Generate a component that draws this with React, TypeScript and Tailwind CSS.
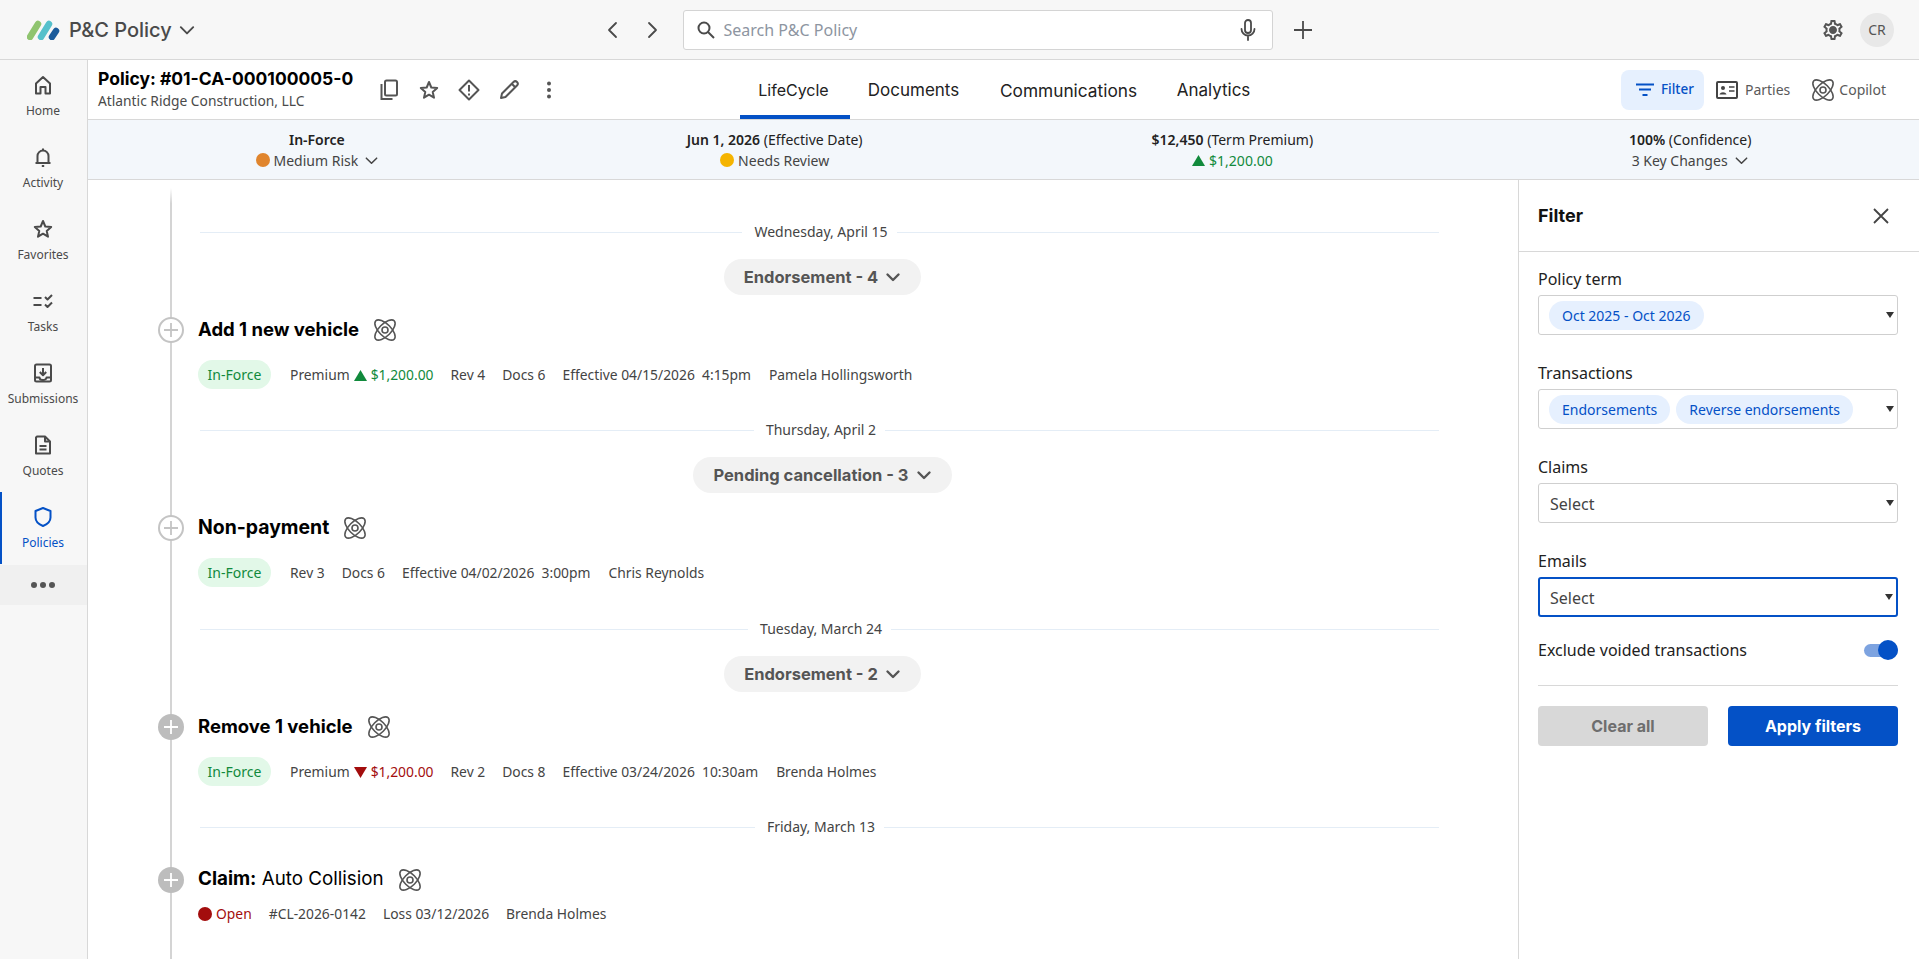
import React from "react";
import { MdOutlineSettings } from "react-icons/md";

const C = "fill-none stroke-current";
const Atom = ({ s = 24 }: { s?: number }) => (
  <svg width={s} height={s} viewBox="0 0 24 24" className="fill-none stroke-[#555] shrink-0" strokeWidth="1.6">
    <ellipse cx="12" cy="12" rx="6" ry="13" transform="rotate(-45 12 12)" />
    <ellipse cx="12" cy="12" rx="6" ry="13" transform="rotate(45 12 12)" />
    <circle cx="12" cy="12" r="3" />
  </svg>
);
const Chev = ({ s = 16, w = 1.6 }: { s?: number; w?: number }) => (
  <svg width={s} height={s} viewBox="0 0 16 16" className={C} strokeWidth={w} strokeLinecap="round" strokeLinejoin="round">
    <path d="M2.500 5.500 8 11l5.500-5.500" />
  </svg>
);
const Dot = ({ c }: { c: string }) => <span className={`inline-block w-[14px] h-[14px] rounded-full ${c}`} />;
const Up = () => (
  <svg width="13" height="11" viewBox="0 0 13 11" className="fill-[#118a3c]"><path d="M6.500 0 13 11H0z" /></svg>
);
const Down = () => (
  <svg width="13" height="11" viewBox="0 0 13 11" className="fill-[#a30d0d]"><path d="M6.500 11 13 0H0z" /></svg>
);

const icons: Record<string, React.ReactNode> = {
  Home: <path d="M5 20.500v-10L12 4l7 6.500v10h-4.500v-6.500h-5v6.500z" />,
  Activity: <><path d="M6.500 18v-7a5.500 5.500 0 0 1 11 0v7" /><path d="M4.500 18h15M12 3.500v2M10.800 21h2.400" /></>,
  Favorites: <path d="m12 4 2.300 5.500 5.900.5-4.500 3.900 1.300 5.800-5-3-5 3 1.300-5.800-4.500-3.900 5.900-.5z" />,
  Tasks: <><path d="M2.500 9h8M2.500 16h8M14 8l2.500 2.500L21 6M14 15.500l2.500 2.500 4.500-4.500" /></>,
  Submissions: <><rect x="4" y="3.500" width="16" height="17" rx="1.500" /><path d="M12 7v7M8.800 11l3.200 3.200 3.200-3.200M4 16.500h4.500a3.500 2.500 0 0 0 7 0H20" /></>,
  Quotes: <><path d="M6 3.500h8l5 5V20.500H5V4.500z" /><path d="M14 3.500v5h5M8.500 13h7M8.500 16.500h7" /></>,
  Policies: <path d="M12 3 19.500 6v6.500c0 4-3.200 6.800-7.500 8.500-4.300-1.700-7.500-4.500-7.500-8.500V6z" />,
};

const NavItem = ({ n, active }: { n: string; active?: boolean }) => (
  <div className={`relative h-[72px] flex flex-col items-center justify-start pt-[13px] pr-[1px] ${active ? "text-[#0451c6]" : "text-[#4a4a4a]"}`}>
    {active && <span className="absolute left-0 top-0 bottom-0 w-[2px] bg-[#0451c6]" />}
    <svg width="24" height="24" viewBox="0 0 24 24" className={C} strokeWidth="2" strokeLinejoin="round">{icons[n]}</svg>
    <span className="text-[12px] leading-[16px] mt-[6px]">{n}</span>
  </div>
);

const DateRow = ({ d }: { d: string }) => (
  <div className="h-5 flex items-center ml-[112px] mr-[79px] gap-[9px] text-[14px] text-[#444]">
    <div className="flex-1 h-px bg-[#e4edf6]" />
    <span className="pl-[3px] pb-[2px]">{d}</span>
    <div className="flex-1 h-px bg-[#e4edf6]" />
  </div>
);
const Pill = ({ t }: { t: string }) => (
  <div className="mt-[17px] ml-[115px] mr-[76px] flex justify-center">
    <div className="h-9 px-[20px] rounded-full bg-[#f2f2f2] flex items-center gap-[7px] font-['Inter',sans-serif] font-bold text-[16.500px] text-[#555]">
      {t}<Chev s={16} w={2.400} />
    </div>
  </div>
);
const Title = ({ filled, children }: { filled?: boolean; children: React.ReactNode }) => (
  <div className="relative h-[26px] mt-[22px] ml-[110px] flex items-center gap-[14px] font-['Inter',sans-serif] text-[18.500px] text-black">
    <span className={`absolute left-[-40px] top-0 w-[26px] h-[26px] rounded-full flex items-center justify-center ${filled ? "bg-[#bdbdbd] text-white" : "bg-white border-2 border-[#c4c4c4] text-[#c4c4c4]"}`}>
      <svg width="16" height="16" viewBox="0 0 16 16" className={C} strokeWidth="1.800"><path d="M8 1v14M1 8h14" /></svg>
    </span>
    <span className="pb-[1px]">{children}</span>
    <Atom />
  </div>
);
const Chip = () => (
  <span className="h-[29px] w-[73px] rounded-full bg-[#e2f8e8] text-[#118a3c] text-[14px] flex items-center justify-center">In-Force</span>
);
const Row = ({ children }: { children: React.ReactNode }) => (
  <div className="mt-[17px] ml-[110px] h-[29px] flex items-center text-[13.850px] text-[#444] whitespace-pre [&>span:not(:first-child)]:pt-[2px]">{children}</div>
);

const Field = ({ l, children, focus }: { l: string; children: React.ReactNode; focus?: boolean }) => (
  <div className="mb-[27px]">
    <div className="text-[16px] leading-[22px] text-[#222] mb-[6px] h-[21px]">{l}</div>
    <div className={`h-10 rounded-[3px] flex items-center pr-[3px] bg-white ${focus ? "border-2 border-[#0451c6] pl-[9px]" : "border border-[#cfcfcf] pl-[10px]"}`}>
      <div className="flex-1 flex gap-[6px] items-center text-[16px] text-[#444]">{children}</div>
      <svg width="8" height="6" viewBox="0 0 8 6" className="fill-[#333]"><path d="M0 0h8L4 6z" /></svg>
    </div>
  </div>
);
const Tag = ({ t }: { t: string }) => (
  <span className="h-[29px] px-[13px] rounded-full bg-[#e6f0fe] text-[#0451c6] text-[14px] flex items-center">{t}</span>
);
const Sel = () => <span className="pl-[1px] pt-[1px]">Select</span>;

export default function App() {
  return (
    <div className="w-[1919px] h-[959px] overflow-hidden flex flex-col bg-white font-['Noto_Sans',sans-serif]">
      <header className="h-[60px] shrink-0 bg-[#f7f7f7] border-b border-[#d8d8d8] grid grid-cols-[1fr_auto_1fr] items-center">
        <div className="flex items-center pl-[27px] text-[#4a4a4a]">
          <svg width="33" height="20" viewBox="0 0 33 20">
            <path d="M3 17 11 4" stroke="#8fc46f" strokeWidth="6.500" strokeLinecap="round" />
            <path d="M14 17 22 4" stroke="#55c0cb" strokeWidth="6.500" strokeLinecap="round" />
            <path d="M25 17l4-6" stroke="#1a5b9b" strokeWidth="6.500" strokeLinecap="round" />
          </svg>
          <span className="ml-[9px] font-['Inter',sans-serif] font-medium text-[20px]">P&amp;C Policy</span>
          <span className="ml-[6px]"><Chev s={18} w={1.700} /></span>
        </div>
        <div className="flex items-center text-[#4a4a4a] pr-[2px]">
          <svg width="20" height="24" viewBox="0 0 20 24" className={`${C} -ml-[1px]`} strokeWidth="1.800" strokeLinecap="round" strokeLinejoin="round"><path d="m14 5-7 7 7 7" /></svg>
          <svg width="20" height="24" viewBox="0 0 20 24" className={`${C} ml-[21px]`} strokeWidth="1.800" strokeLinecap="round" strokeLinejoin="round"><path d="m6 5 7 7-7 7" /></svg>
          <div className="ml-[20px] w-[590px] h-10 bg-white border border-[#d4d4d4] rounded-[3px] flex items-center pl-[12px] pr-[14px]">
            <svg width="20" height="20" viewBox="0 0 20 20" className={C} strokeWidth="2"><circle cx="8" cy="8" r="5.500" /><path d="m12 12 6 6" /></svg>
            <span className="ml-[8px] flex-1 text-[16px] text-[#8d95a1]">Search P&amp;C Policy</span>
            <svg width="20" height="24" viewBox="0 0 20 24" className={C} strokeWidth="1.800" strokeLinecap="round"><rect x="7" y="2" width="6" height="13" rx="3" /><path d="M3.500 11a6.500 6.500 0 0 0 13 0M10 18v4" /></svg>
          </div>
          <svg width="24" height="24" viewBox="0 0 24 24" className={`${C} ml-[18px]`} strokeWidth="1.800"><path d="M12 3v18M3 12h18" /></svg>
        </div>
        <div className="flex items-center justify-end pr-[25px] text-[#555]">
          <span className="relative w-[24px] h-[24px]">
            <MdOutlineSettings size={24} />
            <span className="absolute left-[9px] top-[9px] w-[6px] h-[6px] rounded-full bg-[#555]" />
          </span>
          <span className="ml-[15px] w-[34px] h-[34px] rounded-full bg-[#e8e8e8] text-[14px] flex items-center justify-center">CR</span>
        </div>
      </header>

      <div className="flex-1 flex min-h-0">
        <nav className="w-[88px] shrink-0 bg-[#f7f7f7] border-r border-[#d8d8d8]">
          {["Home", "Activity", "Favorites", "Tasks", "Submissions", "Quotes"].map((n) => <NavItem key={n} n={n} />)}
          <NavItem n="Policies" active />
          <div className="h-10 mt-[1px] pr-[1px] bg-[#f0f0f0] flex items-center justify-center gap-[3px]">
            {[0, 1, 2].map((i) => <span key={i} className="w-[6px] h-[6px] rounded-full bg-[#555]" />)}
          </div>
        </nav>

        <div className="flex-1 flex flex-col min-w-0">
          <div className="h-[60px] shrink-0 border-b border-[#d8d8d8] grid grid-cols-[1fr_auto_1fr] items-center">
            <div className="flex items-center pl-[10px]">
              <div>
                <div className="font-['Inter',sans-serif] font-bold text-[17.500px] leading-[22px] text-black">Policy: #01-CA-000100005-0</div>
                <div className="text-[13.800px] leading-[20px] text-[#4a4a4a] mt-[1px]">Atlantic Ridge Construction, LLC</div>
              </div>
              <div className="ml-[24px] flex items-center gap-[16px] text-[#555]">
                <svg width="24" height="24" viewBox="0 0 24 24" className={C} strokeWidth="2"><path d="M4.500 6v15h11" /><rect x="8" y="2.500" width="12" height="15" rx="1.500" /></svg>
                <svg width="24" height="24" viewBox="0 0 24 24" className={C} strokeWidth="2" strokeLinejoin="round"><path d="m12 4 2.300 5.500 5.900.5-4.500 3.900 1.300 5.800-5-3-5 3 1.300-5.800-4.500-3.900 5.900-.5z" /></svg>
                <svg width="24" height="24" viewBox="0 0 24 24" className={C} strokeWidth="2" strokeLinejoin="round"><path d="M12 2.500 21.500 12 12 21.500 2.500 12z" /><path d="M12 7v6.500M12 15.500v2" /></svg>
                <svg width="24" height="24" viewBox="0 0 24 24" className={C} strokeWidth="2" strokeLinejoin="round"><path d="m4 20 1-4.500L16.500 4a2 2 0 0 1 3.500 3.500L8.500 19zM15 6l3.500 3.500" /></svg>
                <svg width="24" height="24" viewBox="0 0 24 24" className="fill-[#555]"><circle cx="12" cy="5.500" r="2" /><circle cx="12" cy="12" r="2" /><circle cx="12" cy="18.500" r="2" /></svg>
              </div>
            </div>
            <div className="flex h-full font-['Inter',sans-serif] text-[17px] text-[#222]">
              <div className="w-[110px] flex items-center justify-center border-b-4 border-[#0451c6] pt-[4px] pr-[2px] text-[16px]">LifeCycle</div>
              <div className="w-[128px] flex items-center justify-center pt-[2px]">Documents</div>
              <div className="w-[182px] flex items-center justify-center pt-[2px] text-[17.300px]">Communications</div>
              <div className="w-[108px] flex items-center justify-center pt-[2px]">Analytics</div>
            </div>
            <div className="flex items-center justify-end pr-[33px] text-[14px] text-[#5a5a5a]">
              <div className="h-10 w-[83px] rounded-[8px] bg-[#e6f0fe] text-[#0451c6] text-[13.500px] font-medium flex items-center pl-[15px] gap-[7px]">
                <svg width="18" height="14" viewBox="0 0 18 14" className={C} strokeWidth="2"><path d="M0 1.500h18M3 6.500h12M6.500 12h5" /></svg>Filter
              </div>
              <svg width="22" height="20" viewBox="0 0 22 20" className={`${C} ml-[12px] text-[#444]`} strokeWidth="2"><rect x="1" y="2" width="20" height="16" rx="1" /><circle cx="7" cy="8" r="2" className="fill-current stroke-none" /><path d="M3.500 14.500c1-3 6-3 7 0z" className="fill-current stroke-none" /><path d="M13 7h5.500M13 11h5.500" strokeWidth="1.600" /></svg>
              <span className="ml-[7px]">Parties</span>
              <span className="ml-[21px]"><Atom /></span>
              <span className="ml-[4px]">Copilot</span>
            </div>
          </div>

          <div className="h-[60px] shrink-0 bg-[#f3f7fb] border-b border-[#d8d8d8] grid grid-cols-4 text-[14px] leading-[21px] text-[#222] text-center content-center">
            <div>
              <div className="font-semibold">In-Force</div>
              <div className="flex items-center justify-center gap-[4px] text-[#444] pl-[1px]"><Dot c="bg-[#e0852d]" />Medium Risk<span className="ml-[2px]"><Chev s={15} /></span></div>
            </div>
            <div>
              <div><b className="font-semibold">Jun 1, 2026</b> (Effective Date)</div>
              <div className="flex items-center justify-center gap-[4px] text-[#444]"><Dot c="bg-[#f5b400]" />Needs Review</div>
            </div>
            <div>
              <div><b className="font-semibold">$12,450</b> (Term Premium)</div>
              <div className="flex items-center justify-center gap-[4px] text-[#118a3c]"><Up />$1,200.00</div>
            </div>
            <div>
              <div><b className="font-semibold">100%</b> (Confidence)</div>
              <div className="flex items-center justify-center gap-[6px] text-[#444]">3 Key Changes<Chev s={15} /></div>
            </div>
          </div>

          <div className="flex-1 flex min-h-0">
            <main className="relative flex-1 min-w-0 overflow-hidden pt-[42px]">
              <div className="absolute left-[82px] top-[8px] bottom-0 w-[2px] bg-linear-to-b from-white to-[#d4d4d4] to-2%" />
              <DateRow d="Wednesday, April 15" />
              <Pill t="Endorsement - 4" />
              <Title><b className="font-bold">Add 1 new vehicle</b></Title>
              <Row><Chip /><span className="ml-[19px]">Premium</span><span className="mx-[4px]"><Up /></span><span className="text-[#118a3c]">$1,200.00</span><span className="ml-[17px]">Rev 4</span><span className="ml-[17px]">Docs 6</span><span className="ml-[17px]">Effective 04/15/2026  4:15pm</span><span className="ml-[18px]">Pamela Hollingsworth</span></Row>
              <div className="h-[31px]" />
              <DateRow d="Thursday, April 2" />
              <Pill t="Pending cancellation - 3" />
              <Title><b className="font-bold text-[19.400px]">Non-payment</b></Title>
              <Row><Chip /><span className="ml-[19px]">Rev 3</span><span className="ml-[17px]">Docs 6</span><span className="ml-[17px]">Effective 04/02/2026  3:00pm</span><span className="ml-[18px]">Chris Reynolds</span></Row>
              <div className="h-[32px]" />
              <DateRow d="Tuesday, March 24" />
              <Pill t="Endorsement - 2" />
              <Title filled><b className="font-bold">Remove 1 vehicle</b></Title>
              <Row><Chip /><span className="ml-[19px]">Premium</span><span className="mx-[4px]"><Down /></span><span className="text-[#a30d0d]">$1,200.00</span><span className="ml-[17px]">Rev 2</span><span className="ml-[17px]">Docs 8</span><span className="ml-[17px]">Effective 03/24/2026  10:30am</span><span className="ml-[18px]">Brenda Holmes</span></Row>
              <div className="h-[31px]" />
              <DateRow d="Friday, March 13" />
              <div className="h-[8px]" />
              <Title filled><span className="text-[18.800px]"><b className="font-bold">Claim:</b> Auto Collision</span></Title>
              <div className="mt-[11px] ml-[110px] h-[20px] flex items-center text-[13.850px] text-[#444] whitespace-pre"><Dot c="bg-[#a30d0d]" /><span className="ml-[4px] text-[#a30d0d]">Open</span><span className="ml-[17px]">#CL-2026-0142</span><span className="ml-[17px]">Loss 03/12/2026</span><span className="ml-[17px]">Brenda Holmes</span></div>
            </main>

            <aside className="w-[401px] shrink-0 border-l border-[#d8d8d8]">
              <div className="h-[72px] border-b border-[#d8d8d8] flex items-center justify-between pl-[19px] pr-[30px]">
                <span className="font-['Inter',sans-serif] font-bold text-[18px] text-[#111]">Filter</span>
                <svg width="16" height="16" viewBox="0 0 16 16" className={`${C} text-[#444]`} strokeWidth="1.800"><path d="m1 1 14 14M15 1 1 15" /></svg>
              </div>
              <div className="pl-[19px] pr-[21px] pt-[16px]">
                <Field l="Policy term"><Tag t="Oct 2025 - Oct 2026" /></Field>
                <Field l="Transactions"><Tag t="Endorsements" /><Tag t="Reverse endorsements" /></Field>
                <Field l="Claims"><Sel /></Field>
                <Field l="Emails" focus><Sel /></Field>
                <div className="flex items-center justify-between h-[20px] -mt-[4px] text-[16px] text-[#222]">
                  Exclude voided transactions
                  <span className="relative w-[34px] h-[13px] rounded-full bg-[#7da3e0]">
                    <span className="absolute right-0 top-[-4px] w-[20px] h-[20px] rounded-full bg-[#0451c6]" />
                  </span>
                </div>
                <div className="h-px bg-[#d8d8d8] mt-[25px]" />
                <div className="flex gap-[20px] mt-[20px] font-['Inter',sans-serif] font-bold text-[16px]">
                  <div className="w-[170px] h-10 rounded-[4px] bg-[#d8d8d8] text-[#6e6e6e] flex items-center justify-center">Clear all</div>
                  <div className="w-[170px] h-10 rounded-[4px] bg-[#0451c6] text-white flex items-center justify-center">Apply filters</div>
                </div>
              </div>
            </aside>
          </div>
        </div>
      </div>
    </div>
  );
}
